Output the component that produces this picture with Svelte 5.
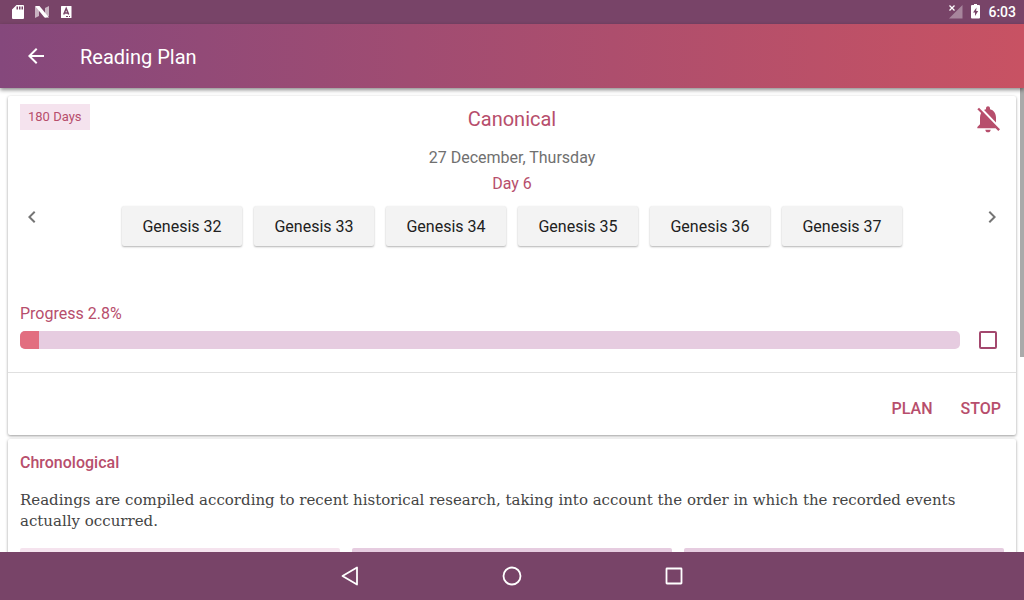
<script lang="ts">
  interface Chapter {
    book: string;
    number: number;
  }

  const chapters: Chapter[] = [32, 33, 34, 35, 36, 37].map((number) => ({
    book: "Genesis",
    number,
  }));

  // Width of the filled part of the bar, in percent
  const filled = 2;

  let done = $state(false);
</script>

<div class="screen">
  <div class="status-bar">
    <div class="status-icons">
      <svg width="16" height="16" viewBox="0 0 16 16" aria-hidden="true">
        <path
          fill="#fff"
          fill-rule="evenodd"
          d="M6.500 1H13a1 1 0 0 1 1 1v12a1 1 0 0 1-1 1H3a1 1 0 0 1-1-1V5.500zM6.500 2.500v3H8v-3zm2.500 0v3h1.500v-3zm2.500 0v3H13v-3z"
        />
      </svg>
      <svg width="16" height="16" viewBox="0 0 16 16" aria-hidden="true">
        <path fill="#fff" opacity="0.6" d="M1 3l4-1v10l-4 2zM11 4l4-2v10l-4 2z" />
        <path fill="#fff" d="M1 2h4.500L15 13.500h-4.500z" />
      </svg>
      <svg width="16" height="16" viewBox="0 0 16 16" aria-hidden="true">
        <rect x="3" y="2" width="10.500" height="12" rx="0.500" fill="#fff" />
        <path
          fill="none"
          stroke="#784468"
          stroke-width="1.500"
          d="M5.700 10.500L8.200 4.500l2.500 6M6.500 9h3.500"
        />
        <path stroke="#784468" d="M8 12.500h2M11 12.500h1" />
      </svg>
    </div>
    <div class="status-right">
      <svg width="16" height="16" viewBox="0 0 16 16" aria-hidden="true">
        <path fill="#fff" opacity="0.35" d="M15.500 1v13.500H2z" />
        <path stroke="#784468" stroke-width="4" d="M2 2l5 5M7 2L2 7" />
        <path stroke="#fff" stroke-width="1.300" d="M2.500 1.500l5 5M7.500 1.500l-5 5" />
      </svg>
      <svg width="9" height="16" viewBox="0 0 9 16" aria-hidden="true">
        <path fill="#fff" d="M3 0h3v1h2a1 1 0 0 1 1 1v11.500a1 1 0 0 1-1 1H1a1 1 0 0 1-1-1V2a1 1 0 0 1 1-1h2z" />
        <path fill="#784468" d="M5.500 3.500L2 8.500h2V12l3.200-5H5.200z" />
      </svg>
      <span class="clock">6:03</span>
    </div>
  </div>

  <header class="app-bar">
    <button class="icon-btn" aria-label="Back">
      <svg width="24" height="24" viewBox="0 0 24 24">
        <path fill="#fff" d="M20 11H7.830l5.590-5.590L12 4l-8 8 8 8 1.410-1.410L7.830 13H20v-2z" />
      </svg>
    </button>
    <h1>Reading Plan</h1>
  </header>

  <div class="viewport">
    <main class="content">
      <section class="card active-plan">
        <div class="plan-head">
          <span class="badge">180 Days</span>
          <h2>Canonical</h2>
          <button class="icon-btn bell" aria-label="Reminder off">
            <svg width="32" height="32" viewBox="0 0 24 24">
              <path
                fill="#b74e6c"
                d="M20 18.690L7.840 6.140 5.270 3.490 4 4.760l2.800 2.800v.010c-.520.990-.8 2.160-.8 3.420v5l-2 2v1h13.730l2 2L21 19.720l-1-1.030zM12 22c1.110 0 2-.890 2-2h-4c0 1.110.890 2 2 2zm6-7.320V11c0-3.080-1.640-5.640-4.500-6.320V4c0-.830-.670-1.500-1.500-1.500s-1.500.670-1.500 1.500v.680c-.5.120-.980.300-1.440.550L18 14.680z"
              />
            </svg>
          </button>
        </div>

        <div class="day">
          <button class="icon-btn" aria-label="Previous day">
            <svg width="24" height="24" viewBox="0 0 24 24">
              <path fill="#757575" d="M15.410 7.410L14 6l-6 6 6 6 1.410-1.410L10.830 12z" />
            </svg>
          </button>
          <div class="day-body">
            <p class="date">27 December, Thursday</p>
            <p class="day-number">Day 6</p>
            <div class="chapters">
              {#each chapters as chapter}
                <button class="chapter-btn">{chapter.book} {chapter.number}</button>
              {/each}
            </div>
          </div>
          <button class="icon-btn" aria-label="Next day">
            <svg width="24" height="24" viewBox="0 0 24 24">
              <path fill="#757575" d="M10 6L8.590 7.410 13.170 12l-4.580 4.590L10 18l6-6z" />
            </svg>
          </button>
        </div>

        <p class="progress-label" id="progress-label">Progress 2.8%</p>
        <div class="progress-row">
          <div
            class="bar"
            role="progressbar"
            aria-labelledby="progress-label"
            aria-valuenow={2.8}
          >
            <div class="bar-fill" style="width: {filled}%"></div>
          </div>
          <input type="checkbox" bind:checked={done} aria-label="Mark day as read" />
        </div>

        <div class="actions">
          <button class="text-btn">PLAN</button>
          <button class="text-btn">STOP</button>
        </div>
      </section>

      <section class="card plan">
        <h3>Chronological</h3>
        <p class="description">
          Readings are compiled according to recent historical research, taking into account the
          order in which the recorded events actually occurred.
        </p>
        <div class="durations">
          <div class="duration light"></div>
          <div class="duration"></div>
          <div class="duration"></div>
        </div>
      </section>
    </main>
    <div class="scroll-thumb"></div>
  </div>

  <nav class="nav-bar">
    <button class="icon-btn" aria-label="Back">
      <svg width="24" height="24" viewBox="0 0 24 24">
        <path
          fill="none"
          stroke="#fff"
          stroke-width="1.800"
          stroke-linejoin="round"
          d="M19 3.500v17L4.500 12z"
        />
      </svg>
    </button>
    <button class="icon-btn" aria-label="Home">
      <svg width="24" height="24" viewBox="0 0 24 24">
        <circle cx="12" cy="12" r="8.500" fill="none" stroke="#fff" stroke-width="1.800" />
      </svg>
    </button>
    <button class="icon-btn" aria-label="Overview">
      <svg width="24" height="24" viewBox="0 0 24 24">
        <rect
          x="4.500"
          y="4.500"
          width="15"
          height="15"
          rx="0.500"
          fill="none"
          stroke="#fff"
          stroke-width="1.800"
        />
      </svg>
    </button>
  </nav>
</div>

<style>
  :global(body) {
    background: #fff;
  }

  .screen {
    display: flex;
    flex-direction: column;
    height: 100vh;
    font-family: Roboto, sans-serif;
    font-size: 16px;
    line-height: 20px;
    color: #212121;
  }

  h1,
  h2,
  h3,
  p {
    margin: 0;
    font-weight: 400;
  }

  button {
    padding: 0;
    border: none;
    background: none;
    font: inherit;
    color: inherit;
    cursor: pointer;
  }

  svg {
    display: block;
  }

  .icon-btn {
    display: flex;
    flex: none;
  }

  .status-bar {
    display: flex;
    flex: none;
    align-items: center;
    justify-content: space-between;
    height: 24px;
    padding: 0 8px 0 10px;
    background: #784468;
    color: #fff;
  }

  .status-icons {
    display: flex;
    gap: 8px;
  }

  .status-right {
    display: flex;
    align-items: center;
    gap: 8px;
  }

  .clock {
    font-size: 14px;
    font-weight: 500;
  }

  .app-bar {
    display: flex;
    flex: none;
    align-items: center;
    gap: 32px;
    height: 64px;
    padding: 0 24px;
    background: linear-gradient(90deg, #85487c, #c85263);
    color: #fff;
    box-shadow: 0 2px 4px rgba(0, 0, 0, 0.45);
    z-index: 1;
  }

  h1 {
    padding-top: 2px;
    font-size: 20px;
    line-height: 24px;
  }

  .viewport {
    position: relative;
    flex: 1;
    min-height: 0;
  }

  .content {
    box-sizing: border-box;
    height: 100%;
    padding: 8px;
    overflow-y: auto;
    scrollbar-width: none;
  }

  .scroll-thumb {
    position: absolute;
    top: 0;
    right: 0;
    width: 4px;
    height: 58%;
    background: #aaa;
  }

  .card {
    margin-bottom: 4px;
    background: #fff;
    border-radius: 2px;
    box-shadow: 0 1px 3px rgba(0, 0, 0, 0.4);
  }

  .plan-head {
    display: grid;
    grid-template-columns: 1fr auto 1fr;
    align-items: center;
    height: 46px;
    padding: 0 12px;
  }

  .badge {
    align-self: start;
    justify-self: start;
    margin-top: 8px;
    padding: 3px 8px;
    background: #f5e3ee;
    color: #b74e6c;
    font-size: 13px;
  }

  h2 {
    font-size: 20px;
    line-height: 24px;
    color: #b74e6c;
  }

  .bell {
    justify-self: end;
  }

  .day {
    display: flex;
    align-items: center;
    justify-content: space-between;
    min-height: 150px;
    padding: 0 12px;
  }

  .day-body {
    align-self: flex-start;
    padding-top: 6px;
    text-align: center;
  }

  .date {
    color: #707070;
  }

  .day-number {
    margin-top: 6px;
    color: #b74e6c;
  }

  .chapters {
    display: flex;
    gap: 12px;
    margin-top: 12px;
  }

  .chapter-btn {
    width: 120px;
    height: 40px;
    padding-top: 2px;
    background: #f3f3f3;
    border-radius: 2px;
    box-shadow: 0 1px 2px rgba(0, 0, 0, 0.3);
  }

  .progress-label {
    padding: 12px 12px 0;
    color: #b74e6c;
  }

  .progress-row {
    display: flex;
    align-items: center;
    gap: 19px;
    padding: 7px 19px 23px 12px;
    border-bottom: 1px solid #e0e0e0;
  }

  .bar {
    flex: 1;
    height: 18px;
    background: #e6cce0;
    border-radius: 5px;
    overflow: hidden;
  }

  .bar-fill {
    height: 100%;
    background: #e26e80;
  }

  input[type="checkbox"] {
    appearance: none;
    box-sizing: border-box;
    width: 18px;
    height: 18px;
    margin: 0;
    border: 2px solid #a3486e;
    border-radius: 2px;
  }

  input[type="checkbox"]:checked {
    background: #a3486e;
  }

  .actions {
    display: flex;
    justify-content: flex-end;
    gap: 28px;
    padding: 26px 15px 16px;
  }

  .text-btn {
    color: #b74e6c;
    font-weight: 500;
  }

  .plan {
    padding: 14px 12px 12px;
  }

  h3 {
    font-size: 16px;
    font-weight: 500;
    color: #b74e6c;
  }

  .description {
    margin-top: 17px;
    font-family: "Roboto Slab", "DejaVu Serif", serif;
    font-size: 15px;
    line-height: 21px;
    color: #444;
  }

  .durations {
    display: grid;
    grid-template-columns: repeat(3, 1fr);
    gap: 12px;
    margin-top: 16px;
  }

  .duration {
    height: 40px;
    background: #e6cce0;
    border-radius: 2px;
  }

  .duration.light {
    background: #f5e3ee;
  }

  .nav-bar {
    display: flex;
    flex: none;
    align-items: center;
    justify-content: center;
    gap: 138px;
    height: 48px;
    background: #784468;
    z-index: 1;
  }
</style>
